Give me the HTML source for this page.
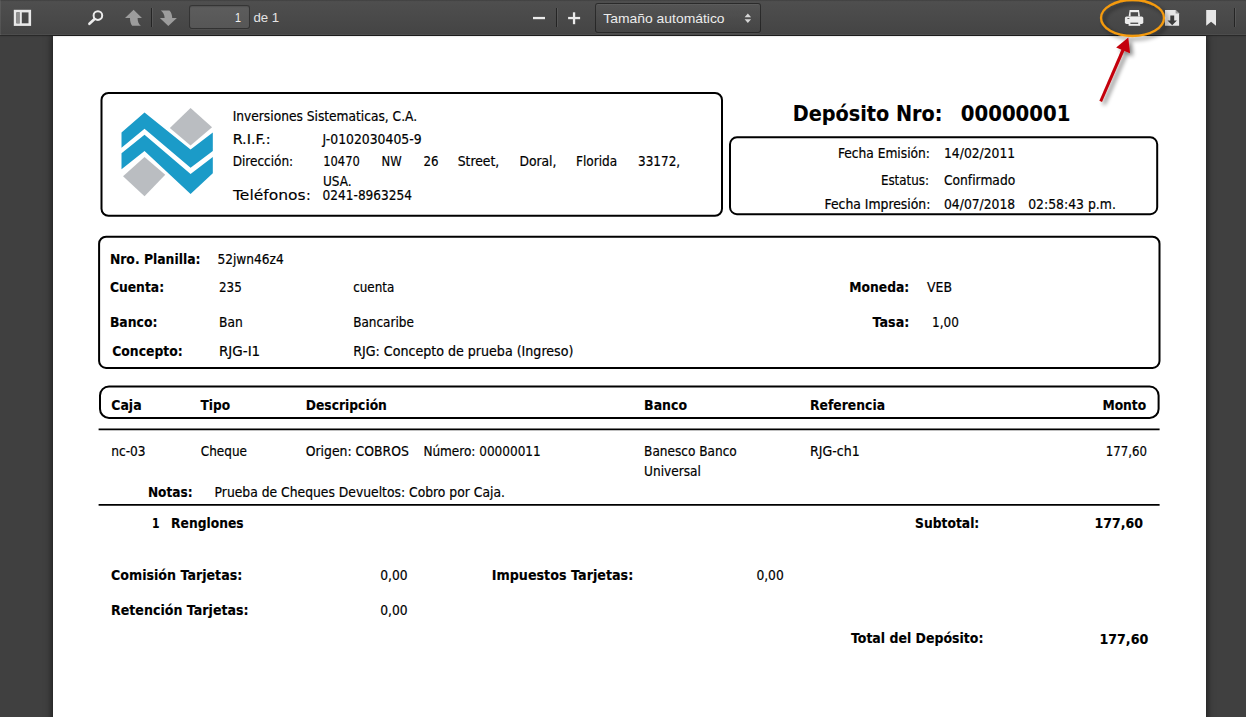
<!DOCTYPE html>
<html lang="es"><head><meta charset="utf-8"><title>Depósito Nro: 00000001</title>
<style>
html,body{margin:0;padding:0;overflow:hidden;}
body{width:1246px;height:717px;overflow:hidden;background:#404040;position:relative;font-family:"DejaVu Sans","Liberation Sans",sans-serif;}
#toolbar{position:absolute;left:0;top:0;width:1246px;height:35px;background:#474747 linear-gradient(hsla(0,0%,31%,.99),hsla(0,0%,26.5%,.95));box-shadow:inset 1px 0 0 hsla(0,0%,100%,.08),inset 0 1px 1px hsla(0,0%,0%,.15),inset 0 -1px 0 hsla(0,0%,100%,.05),0 1px 0 hsla(0,0%,0%,.25),0 1px 2px hsla(0,0%,0%,.2);z-index:2;}
#page{position:absolute;left:53px;top:36px;width:1153px;height:700px;background:#fff;box-shadow:0 0 7px 1px rgba(0,0,0,.6);z-index:1;}
#ov{position:absolute;left:0;top:0;z-index:3;}
.tb{position:absolute;color:#e6e6e6;font-size:13.2px;line-height:16px;white-space:nowrap;}
.sep{position:absolute;top:8px;width:1px;height:19px;background:rgba(0,0,0,.5);box-shadow:1px 0 0 rgba(255,255,255,.08);}
#pn{position:absolute;left:189px;top:5px;width:59px;height:22px;border:1px solid rgba(0,0,0,.42);border-radius:3px;background:rgba(255,255,255,.09);box-shadow:inset 0 1px 1px rgba(0,0,0,.12),0 1px 0 rgba(255,255,255,.05);}
#zm{position:absolute;left:595px;top:3px;width:164px;height:28px;border:1px solid rgba(0,0,0,.45);border-radius:3px;background:linear-gradient(rgba(255,255,255,.04),rgba(255,255,255,.0));box-shadow:inset 0 1px 0 rgba(255,255,255,.05),0 1px 0 rgba(255,255,255,.05);}
</style></head>
<body>
<div id="toolbar">
<div id="pn"></div>
<div class="sep" style="left:151px"></div>
<div class="sep" style="left:556px"></div>
<div class="sep" style="left:1234px"></div>
<div id="zm"></div>
</div>
<div id="page"></div>
<svg id="ov" width="1246" height="717" viewBox="0 0 1246 717">
<g id="icons">
<!-- sidebar toggle -->
<rect x="15.1" y="11.1" width="14.7" height="13.5" fill="none" stroke="#e9e9e9" stroke-width="2.6"/>
<rect x="16.4" y="12.4" width="3.4" height="10.9" fill="#8f8f8f"/>
<rect x="19.8" y="12" width="2" height="12" fill="#e9e9e9"/>
<!-- find -->
<circle cx="97.9" cy="15.6" r="4.3" fill="none" stroke="#ececec" stroke-width="2"/>
<line x1="94.3" y1="19.3" x2="89.4" y2="23.8" stroke="#ececec" stroke-width="2.6" stroke-linecap="round"/>
<!-- up / down -->
<path d="M133.6,9.7 L142,17.9 L137.6,17.9 C137.6,21.5 138.8,24 140.9,25.8 L132.2,25.8 C130.6,23.6 130,21 130,17.9 L125,17.9 Z" fill="#9c9c9c"/>
<path d="M168.3,26.1 L159.9,18.1 L164.6,18.1 C164.6,14.8 163.2,12.2 160.8,10.4 L169.4,10.4 C171.4,12.4 172.2,15 172.2,18.1 L176.9,18.1 Z" fill="#9c9c9c"/>
<!-- zoom out / in -->
<rect x="533" y="16.9" width="12" height="2.3" fill="#ececec"/>
<rect x="568.1" y="16.9" width="12" height="2.3" fill="#ececec"/>
<rect x="572.9" y="12.3" width="2.3" height="11.9" fill="#ececec"/>
<!-- select arrows -->
<path d="M744.6,17.3 L747.85,13.6 L751.1,17.3 Z M744.6,19.3 L751.1,19.3 L747.85,23 Z" fill="#d6d6d6"/>
<!-- print -->
<path d="M1128.6,16.6 L1129.6,9.9 L1139,9.9 L1140,16.6 Z" fill="#ececec"/>
<rect x="1130.6" y="12.2" width="7.5" height="4.4" fill="#4a4a4a"/>
<rect x="1124.9" y="16.4" width="18.4" height="7.5" rx="1.6" fill="#ececec"/>
<rect x="1128.6" y="22.6" width="11.6" height="3.2" fill="#ececec"/>
<rect x="1130.4" y="22.6" width="7.8" height="1.4" fill="#555"/>
<rect x="1127.4" y="18.1" width="2" height="0.9" fill="#555"/>
<!-- download -->
<path d="M1165,10.1 L1175.6,10.1 L1179.1,13.6 L1179.1,25.8 L1165,25.8 Z" fill="#e6e6e6"/>
<path d="M1175.6,10.1 L1175.6,13.6 L1179.1,13.6 Z" fill="#9a9a9a"/>
<path d="M1170.3,15.4 L1174.2,15.4 L1174.2,20.6 L1176.9,20.6 L1172.2,25.2 L1167.5,20.6 L1170.3,20.6 Z" fill="#3c3c3c"/>
<!-- bookmark -->
<path d="M1206.2,10.1 L1216,10.1 L1216,25.8 L1211.1,21.8 L1206.2,25.8 Z" fill="#e6e6e6"/>
</g>
<g transform="translate(110,98) scale(0.15345)">
<polygon points="75,225 225,95 525,335 670,225 670,345 525,455 225,200 75,325" fill="#1b9bc8"/>
<polygon points="75,360 225,240 525,495 670,385 670,490 525,625 225,345 75,465" fill="#1b9bc8"/>
<polygon points="525,65 665,190 525,310 390,195" fill="#babdc1"/>
<polygon points="225,385 360,500 225,640 85,510" fill="#babdc1"/>
</g>
<rect x="101.5" y="93.0" width="620.5" height="122.80000000000001" rx="7" ry="7" fill="none" stroke="#000" stroke-width="2.0"/>
<rect x="730.0" y="137.3" width="427.20000000000005" height="76.89999999999998" rx="7" ry="7" fill="none" stroke="#000" stroke-width="2.0"/>
<rect x="99.1" y="236.7" width="1060.4" height="131.2" rx="7" ry="7" fill="none" stroke="#000" stroke-width="2.0"/>
<rect x="100.0" y="386.5" width="1058.6" height="31.399999999999977" rx="9" ry="9" fill="none" stroke="#000" stroke-width="2.0"/>
<line x1="98.6" y1="429.4" x2="1159.6" y2="429.4" stroke="#000" stroke-width="1.8"/>
<line x1="98.6" y1="504.8" x2="1159.6" y2="504.8" stroke="#000" stroke-width="1.8"/>
<text x="232.7" y="121.2" font-family="'DejaVu Sans Condensed', 'Liberation Sans', sans-serif" font-size="13.3" textLength="184.4" lengthAdjust="spacingAndGlyphs" fill="#000" stroke="#000" stroke-width="0.18">Inversiones Sistematicas, C.A.</text>
<text x="232.7" y="143.7" font-family="'DejaVu Sans Condensed', 'Liberation Sans', sans-serif" font-size="13.3" textLength="38.0" lengthAdjust="spacingAndGlyphs" fill="#000" stroke="#000" stroke-width="0.18">R.I.F.:</text>
<text x="322.6" y="143.7" font-family="'DejaVu Sans Condensed', 'Liberation Sans', sans-serif" font-size="13.3" textLength="99.0" lengthAdjust="spacingAndGlyphs" fill="#000" stroke="#000" stroke-width="0.18">J-0102030405-9</text>
<text x="232.7" y="165.8" font-family="'DejaVu Sans Condensed', 'Liberation Sans', sans-serif" font-size="13.3" textLength="60.5" lengthAdjust="spacingAndGlyphs" fill="#000" stroke="#000" stroke-width="0.18">Dirección:</text>
<text x="323.2" y="165.8" font-family="'DejaVu Sans Condensed', 'Liberation Sans', sans-serif" font-size="13.3" textLength="36.6" lengthAdjust="spacingAndGlyphs" fill="#000" stroke="#000" stroke-width="0.18">10470</text>
<text x="381.5" y="165.8" font-family="'DejaVu Sans Condensed', 'Liberation Sans', sans-serif" font-size="13.3" textLength="20.1" lengthAdjust="spacingAndGlyphs" fill="#000" stroke="#000" stroke-width="0.18">NW</text>
<text x="423.4" y="165.8" font-family="'DejaVu Sans Condensed', 'Liberation Sans', sans-serif" font-size="13.3" textLength="15.1" lengthAdjust="spacingAndGlyphs" fill="#000" stroke="#000" stroke-width="0.18">26</text>
<text x="457.7" y="165.8" font-family="'DejaVu Sans Condensed', 'Liberation Sans', sans-serif" font-size="13.3" textLength="41.5" lengthAdjust="spacingAndGlyphs" fill="#000" stroke="#000" stroke-width="0.18">Street,</text>
<text x="519.4" y="165.8" font-family="'DejaVu Sans Condensed', 'Liberation Sans', sans-serif" font-size="13.3" textLength="37.1" lengthAdjust="spacingAndGlyphs" fill="#000" stroke="#000" stroke-width="0.18">Doral,</text>
<text x="576.0" y="165.8" font-family="'DejaVu Sans Condensed', 'Liberation Sans', sans-serif" font-size="13.3" textLength="41.2" lengthAdjust="spacingAndGlyphs" fill="#000" stroke="#000" stroke-width="0.18">Florida</text>
<text x="638.0" y="165.8" font-family="'DejaVu Sans Condensed', 'Liberation Sans', sans-serif" font-size="13.3" textLength="42.2" lengthAdjust="spacingAndGlyphs" fill="#000" stroke="#000" stroke-width="0.18">33172,</text>
<text x="322.9" y="185.6" font-family="'DejaVu Sans Condensed', 'Liberation Sans', sans-serif" font-size="13.3" textLength="28.6" lengthAdjust="spacingAndGlyphs" fill="#000" stroke="#000" stroke-width="0.18">USA.</text>
<text x="233.0" y="199.5" font-family="'DejaVu Sans', 'Liberation Sans', sans-serif" font-size="13.3" textLength="77.9" lengthAdjust="spacingAndGlyphs" fill="#000" stroke="#000" stroke-width="0.1">Teléfonos:</text>
<text x="322.6" y="199.5" font-family="'DejaVu Sans Condensed', 'Liberation Sans', sans-serif" font-size="13.3" textLength="89.4" lengthAdjust="spacingAndGlyphs" fill="#000" stroke="#000" stroke-width="0.18">0241-8963254</text>
<text x="792.8" y="120.8" font-family="'DejaVu Sans', 'Liberation Sans', sans-serif" font-size="20.6" font-weight="bold" textLength="149.7" lengthAdjust="spacingAndGlyphs" fill="#000" stroke="#000" stroke-width="0.12">Depósito Nro:</text>
<text x="960.8" y="120.8" font-family="'DejaVu Sans', 'Liberation Sans', sans-serif" font-size="20.6" font-weight="bold" textLength="109.6" lengthAdjust="spacingAndGlyphs" fill="#000" stroke="#000" stroke-width="0.12">00000001</text>
<text x="837.9" y="157.8" font-family="'DejaVu Sans Condensed', 'Liberation Sans', sans-serif" font-size="13.3" textLength="92.1" lengthAdjust="spacingAndGlyphs" fill="#000" stroke="#000" stroke-width="0.18">Fecha Emisión:</text>
<text x="944.0" y="157.8" font-family="'DejaVu Sans Condensed', 'Liberation Sans', sans-serif" font-size="13.3" textLength="71.2" lengthAdjust="spacingAndGlyphs" fill="#000" stroke="#000" stroke-width="0.18">14/02/2011</text>
<text x="880.9" y="184.8" font-family="'DejaVu Sans Condensed', 'Liberation Sans', sans-serif" font-size="13.3" textLength="48.1" lengthAdjust="spacingAndGlyphs" fill="#000" stroke="#000" stroke-width="0.18">Estatus:</text>
<text x="944.0" y="184.8" font-family="'DejaVu Sans Condensed', 'Liberation Sans', sans-serif" font-size="13.3" textLength="71.2" lengthAdjust="spacingAndGlyphs" fill="#000" stroke="#000" stroke-width="0.18">Confirmado</text>
<text x="824.6" y="208.7" font-family="'DejaVu Sans Condensed', 'Liberation Sans', sans-serif" font-size="13.3" textLength="105.8" lengthAdjust="spacingAndGlyphs" fill="#000" stroke="#000" stroke-width="0.18">Fecha Impresión:</text>
<text x="944.0" y="208.7" font-family="'DejaVu Sans Condensed', 'Liberation Sans', sans-serif" font-size="13.3" textLength="71.2" lengthAdjust="spacingAndGlyphs" fill="#000" stroke="#000" stroke-width="0.18">04/07/2018</text>
<text x="1028.2" y="208.7" font-family="'DejaVu Sans Condensed', 'Liberation Sans', sans-serif" font-size="13.3" textLength="87.7" lengthAdjust="spacingAndGlyphs" fill="#000" stroke="#000" stroke-width="0.18">02:58:43 p.m.</text>
<text x="109.9" y="264.3" font-family="'DejaVu Sans', 'Liberation Sans', sans-serif" font-size="13.3" font-weight="bold" textLength="90.6" lengthAdjust="spacingAndGlyphs" fill="#000" stroke="#000" stroke-width="0.12">Nro. Planilla:</text>
<text x="217.4" y="264.3" font-family="'DejaVu Sans Condensed', 'Liberation Sans', sans-serif" font-size="13.3" textLength="66.4" lengthAdjust="spacingAndGlyphs" fill="#000" stroke="#000" stroke-width="0.18">52jwn46z4</text>
<text x="109.9" y="292.3" font-family="'DejaVu Sans', 'Liberation Sans', sans-serif" font-size="13.3" font-weight="bold" textLength="54.2" lengthAdjust="spacingAndGlyphs" fill="#000" stroke="#000" stroke-width="0.12">Cuenta:</text>
<text x="219.0" y="292.3" font-family="'DejaVu Sans Condensed', 'Liberation Sans', sans-serif" font-size="13.3" textLength="22.7" lengthAdjust="spacingAndGlyphs" fill="#000" stroke="#000" stroke-width="0.18">235</text>
<text x="353.2" y="292.3" font-family="'DejaVu Sans Condensed', 'Liberation Sans', sans-serif" font-size="13.3" textLength="41.1" lengthAdjust="spacingAndGlyphs" fill="#000" stroke="#000" stroke-width="0.18">cuenta</text>
<text x="849.3" y="292.3" font-family="'DejaVu Sans', 'Liberation Sans', sans-serif" font-size="13.3" font-weight="bold" textLength="60.0" lengthAdjust="spacingAndGlyphs" fill="#000" stroke="#000" stroke-width="0.12">Moneda:</text>
<text x="927.0" y="292.3" font-family="'DejaVu Sans Condensed', 'Liberation Sans', sans-serif" font-size="13.3" textLength="25.0" lengthAdjust="spacingAndGlyphs" fill="#000" stroke="#000" stroke-width="0.18">VEB</text>
<text x="109.9" y="327.0" font-family="'DejaVu Sans', 'Liberation Sans', sans-serif" font-size="13.3" font-weight="bold" textLength="47.5" lengthAdjust="spacingAndGlyphs" fill="#000" stroke="#000" stroke-width="0.12">Banco:</text>
<text x="219.0" y="327.0" font-family="'DejaVu Sans Condensed', 'Liberation Sans', sans-serif" font-size="13.3" textLength="23.7" lengthAdjust="spacingAndGlyphs" fill="#000" stroke="#000" stroke-width="0.18">Ban</text>
<text x="353.2" y="327.0" font-family="'DejaVu Sans Condensed', 'Liberation Sans', sans-serif" font-size="13.3" textLength="60.7" lengthAdjust="spacingAndGlyphs" fill="#000" stroke="#000" stroke-width="0.18">Bancaribe</text>
<text x="872.5" y="327.0" font-family="'DejaVu Sans', 'Liberation Sans', sans-serif" font-size="13.3" font-weight="bold" textLength="36.8" lengthAdjust="spacingAndGlyphs" fill="#000" stroke="#000" stroke-width="0.12">Tasa:</text>
<text x="932.0" y="327.0" font-family="'DejaVu Sans Condensed', 'Liberation Sans', sans-serif" font-size="13.3" textLength="26.8" lengthAdjust="spacingAndGlyphs" fill="#000" stroke="#000" stroke-width="0.18">1,00</text>
<text x="112.2" y="356.3" font-family="'DejaVu Sans', 'Liberation Sans', sans-serif" font-size="13.3" font-weight="bold" textLength="70.5" lengthAdjust="spacingAndGlyphs" fill="#000" stroke="#000" stroke-width="0.12">Concepto:</text>
<text x="219.0" y="356.3" font-family="'DejaVu Sans Condensed', 'Liberation Sans', sans-serif" font-size="13.3" textLength="41.2" lengthAdjust="spacingAndGlyphs" fill="#000" stroke="#000" stroke-width="0.18">RJG-I1</text>
<text x="353.2" y="356.3" font-family="'DejaVu Sans Condensed', 'Liberation Sans', sans-serif" font-size="13.3" textLength="220.2" lengthAdjust="spacingAndGlyphs" fill="#000" stroke="#000" stroke-width="0.18">RJG: Concepto de prueba (Ingreso)</text>
<text x="111.2" y="410.3" font-family="'DejaVu Sans', 'Liberation Sans', sans-serif" font-size="13.6" font-weight="bold" textLength="30.4" lengthAdjust="spacingAndGlyphs" fill="#000" stroke="#000" stroke-width="0.12">Caja</text>
<text x="200.5" y="410.3" font-family="'DejaVu Sans', 'Liberation Sans', sans-serif" font-size="13.6" font-weight="bold" textLength="29.7" lengthAdjust="spacingAndGlyphs" fill="#000" stroke="#000" stroke-width="0.12">Tipo</text>
<text x="305.7" y="410.3" font-family="'DejaVu Sans', 'Liberation Sans', sans-serif" font-size="13.6" font-weight="bold" textLength="81.2" lengthAdjust="spacingAndGlyphs" fill="#000" stroke="#000" stroke-width="0.12">Descripción</text>
<text x="644.1" y="410.3" font-family="'DejaVu Sans', 'Liberation Sans', sans-serif" font-size="13.6" font-weight="bold" textLength="42.9" lengthAdjust="spacingAndGlyphs" fill="#000" stroke="#000" stroke-width="0.12">Banco</text>
<text x="810.0" y="410.3" font-family="'DejaVu Sans', 'Liberation Sans', sans-serif" font-size="13.6" font-weight="bold" textLength="75.0" lengthAdjust="spacingAndGlyphs" fill="#000" stroke="#000" stroke-width="0.12">Referencia</text>
<text x="1102.4" y="410.3" font-family="'DejaVu Sans', 'Liberation Sans', sans-serif" font-size="13.6" font-weight="bold" textLength="43.8" lengthAdjust="spacingAndGlyphs" fill="#000" stroke="#000" stroke-width="0.12">Monto</text>
<text x="111.2" y="456.0" font-family="'DejaVu Sans Condensed', 'Liberation Sans', sans-serif" font-size="13.3" textLength="34.4" lengthAdjust="spacingAndGlyphs" fill="#000" stroke="#000" stroke-width="0.18">nc-03</text>
<text x="200.8" y="456.0" font-family="'DejaVu Sans Condensed', 'Liberation Sans', sans-serif" font-size="13.3" textLength="46.2" lengthAdjust="spacingAndGlyphs" fill="#000" stroke="#000" stroke-width="0.18">Cheque</text>
<text x="305.7" y="456.0" font-family="'DejaVu Sans Condensed', 'Liberation Sans', sans-serif" font-size="13.3" textLength="103.1" lengthAdjust="spacingAndGlyphs" fill="#000" stroke="#000" stroke-width="0.18">Origen: COBROS</text>
<text x="423.4" y="456.0" font-family="'DejaVu Sans Condensed', 'Liberation Sans', sans-serif" font-size="13.3" textLength="117.3" lengthAdjust="spacingAndGlyphs" fill="#000" stroke="#000" stroke-width="0.18">Número: 00000011</text>
<text x="644.1" y="456.0" font-family="'DejaVu Sans Condensed', 'Liberation Sans', sans-serif" font-size="13.3" textLength="92.7" lengthAdjust="spacingAndGlyphs" fill="#000" stroke="#000" stroke-width="0.18">Banesco Banco</text>
<text x="644.1" y="476.3" font-family="'DejaVu Sans Condensed', 'Liberation Sans', sans-serif" font-size="13.3" textLength="56.8" lengthAdjust="spacingAndGlyphs" fill="#000" stroke="#000" stroke-width="0.18">Universal</text>
<text x="810.0" y="456.0" font-family="'DejaVu Sans Condensed', 'Liberation Sans', sans-serif" font-size="13.3" textLength="49.7" lengthAdjust="spacingAndGlyphs" fill="#000" stroke="#000" stroke-width="0.18">RJG-ch1</text>
<text x="1105.7" y="456.0" font-family="'DejaVu Sans Condensed', 'Liberation Sans', sans-serif" font-size="13.3" textLength="41.2" lengthAdjust="spacingAndGlyphs" fill="#000" stroke="#000" stroke-width="0.18">177,60</text>
<text x="147.9" y="496.6" font-family="'DejaVu Sans', 'Liberation Sans', sans-serif" font-size="13.3" font-weight="bold" textLength="44.7" lengthAdjust="spacingAndGlyphs" fill="#000" stroke="#000" stroke-width="0.12">Notas:</text>
<text x="214.6" y="496.6" font-family="'DejaVu Sans Condensed', 'Liberation Sans', sans-serif" font-size="13.3" textLength="290.3" lengthAdjust="spacingAndGlyphs" fill="#000" stroke="#000" stroke-width="0.18">Prueba de Cheques Devueltos: Cobro por Caja.</text>
<text x="152.0" y="527.5" font-family="'DejaVu Sans', 'Liberation Sans', sans-serif" font-size="13.3" font-weight="bold" textLength="7.5" lengthAdjust="spacingAndGlyphs" fill="#000" stroke="#000" stroke-width="0.12">1</text>
<text x="171.1" y="527.5" font-family="'DejaVu Sans', 'Liberation Sans', sans-serif" font-size="13.3" font-weight="bold" textLength="72.5" lengthAdjust="spacingAndGlyphs" fill="#000" stroke="#000" stroke-width="0.12">Renglones</text>
<text x="915.1" y="527.5" font-family="'DejaVu Sans', 'Liberation Sans', sans-serif" font-size="13.3" font-weight="bold" textLength="64.2" lengthAdjust="spacingAndGlyphs" fill="#000" stroke="#000" stroke-width="0.12">Subtotal:</text>
<text x="1094.4" y="527.5" font-family="'DejaVu Sans', 'Liberation Sans', sans-serif" font-size="13.3" font-weight="bold" textLength="48.5" lengthAdjust="spacingAndGlyphs" fill="#000" stroke="#000" stroke-width="0.12">177,60</text>
<text x="111.0" y="579.5" font-family="'DejaVu Sans', 'Liberation Sans', sans-serif" font-size="13.3" font-weight="bold" textLength="131.3" lengthAdjust="spacingAndGlyphs" fill="#000" stroke="#000" stroke-width="0.12">Comisión Tarjetas:</text>
<text x="380.3" y="579.5" font-family="'DejaVu Sans Condensed', 'Liberation Sans', sans-serif" font-size="13.3" textLength="27.3" lengthAdjust="spacingAndGlyphs" fill="#000" stroke="#000" stroke-width="0.18">0,00</text>
<text x="491.7" y="579.5" font-family="'DejaVu Sans', 'Liberation Sans', sans-serif" font-size="13.3" font-weight="bold" textLength="141.6" lengthAdjust="spacingAndGlyphs" fill="#000" stroke="#000" stroke-width="0.12">Impuestos Tarjetas:</text>
<text x="756.4" y="579.5" font-family="'DejaVu Sans Condensed', 'Liberation Sans', sans-serif" font-size="13.3" textLength="27.3" lengthAdjust="spacingAndGlyphs" fill="#000" stroke="#000" stroke-width="0.18">0,00</text>
<text x="111.0" y="614.7" font-family="'DejaVu Sans', 'Liberation Sans', sans-serif" font-size="13.3" font-weight="bold" textLength="137.6" lengthAdjust="spacingAndGlyphs" fill="#000" stroke="#000" stroke-width="0.12">Retención Tarjetas:</text>
<text x="380.3" y="614.7" font-family="'DejaVu Sans Condensed', 'Liberation Sans', sans-serif" font-size="13.3" textLength="27.3" lengthAdjust="spacingAndGlyphs" fill="#000" stroke="#000" stroke-width="0.18">0,00</text>
<text x="850.9" y="642.9" font-family="'DejaVu Sans', 'Liberation Sans', sans-serif" font-size="13.3" font-weight="bold" textLength="132.5" lengthAdjust="spacingAndGlyphs" fill="#000" stroke="#000" stroke-width="0.12">Total del Depósito:</text>
<text x="1099.4" y="643.7" font-family="'DejaVu Sans', 'Liberation Sans', sans-serif" font-size="13.3" font-weight="bold" textLength="48.9" lengthAdjust="spacingAndGlyphs" fill="#000" stroke="#000" stroke-width="0.12">177,60</text>
<text x="234.9" y="22.0" font-family="'Liberation Sans', 'Liberation Sans', sans-serif" font-size="13.6" textLength="6.0" lengthAdjust="spacingAndGlyphs" fill="#f4f4f4">1</text>
<text x="253.4" y="22.0" font-family="'Liberation Sans', 'Liberation Sans', sans-serif" font-size="13.6" textLength="25.8" lengthAdjust="spacingAndGlyphs" fill="#e4e4e4">de 1</text>
<text x="603.3" y="23.4" font-family="'Liberation Sans', 'Liberation Sans', sans-serif" font-size="13.6" textLength="121.3" lengthAdjust="spacingAndGlyphs" fill="#ececec">Tamaño automático</text>
<defs><filter id="sh" x="-20%" y="-20%" width="150%" height="150%"><feGaussianBlur in="SourceAlpha" stdDeviation="2"/><feOffset dx="3.2" dy="3.2"/><feComponentTransfer><feFuncA type="linear" slope="0.5"/></feComponentTransfer><feMerge><feMergeNode/><feMergeNode in="SourceGraphic"/></feMerge></filter></defs>
<g filter="url(#sh)">
<ellipse cx="1132.5" cy="18" rx="31.5" ry="18" fill="none" stroke="#f59a0c" stroke-width="2.3"/>
<polygon points="1099.4,100.7 1102.0,101.9 1125.0,49.4 1122.0,48.2" fill="#c40008"/>
<polygon points="1128.3,37.6 1116.2,47.4 1130,53.2" fill="#c40008"/>
</g>
</svg>
</body></html>
